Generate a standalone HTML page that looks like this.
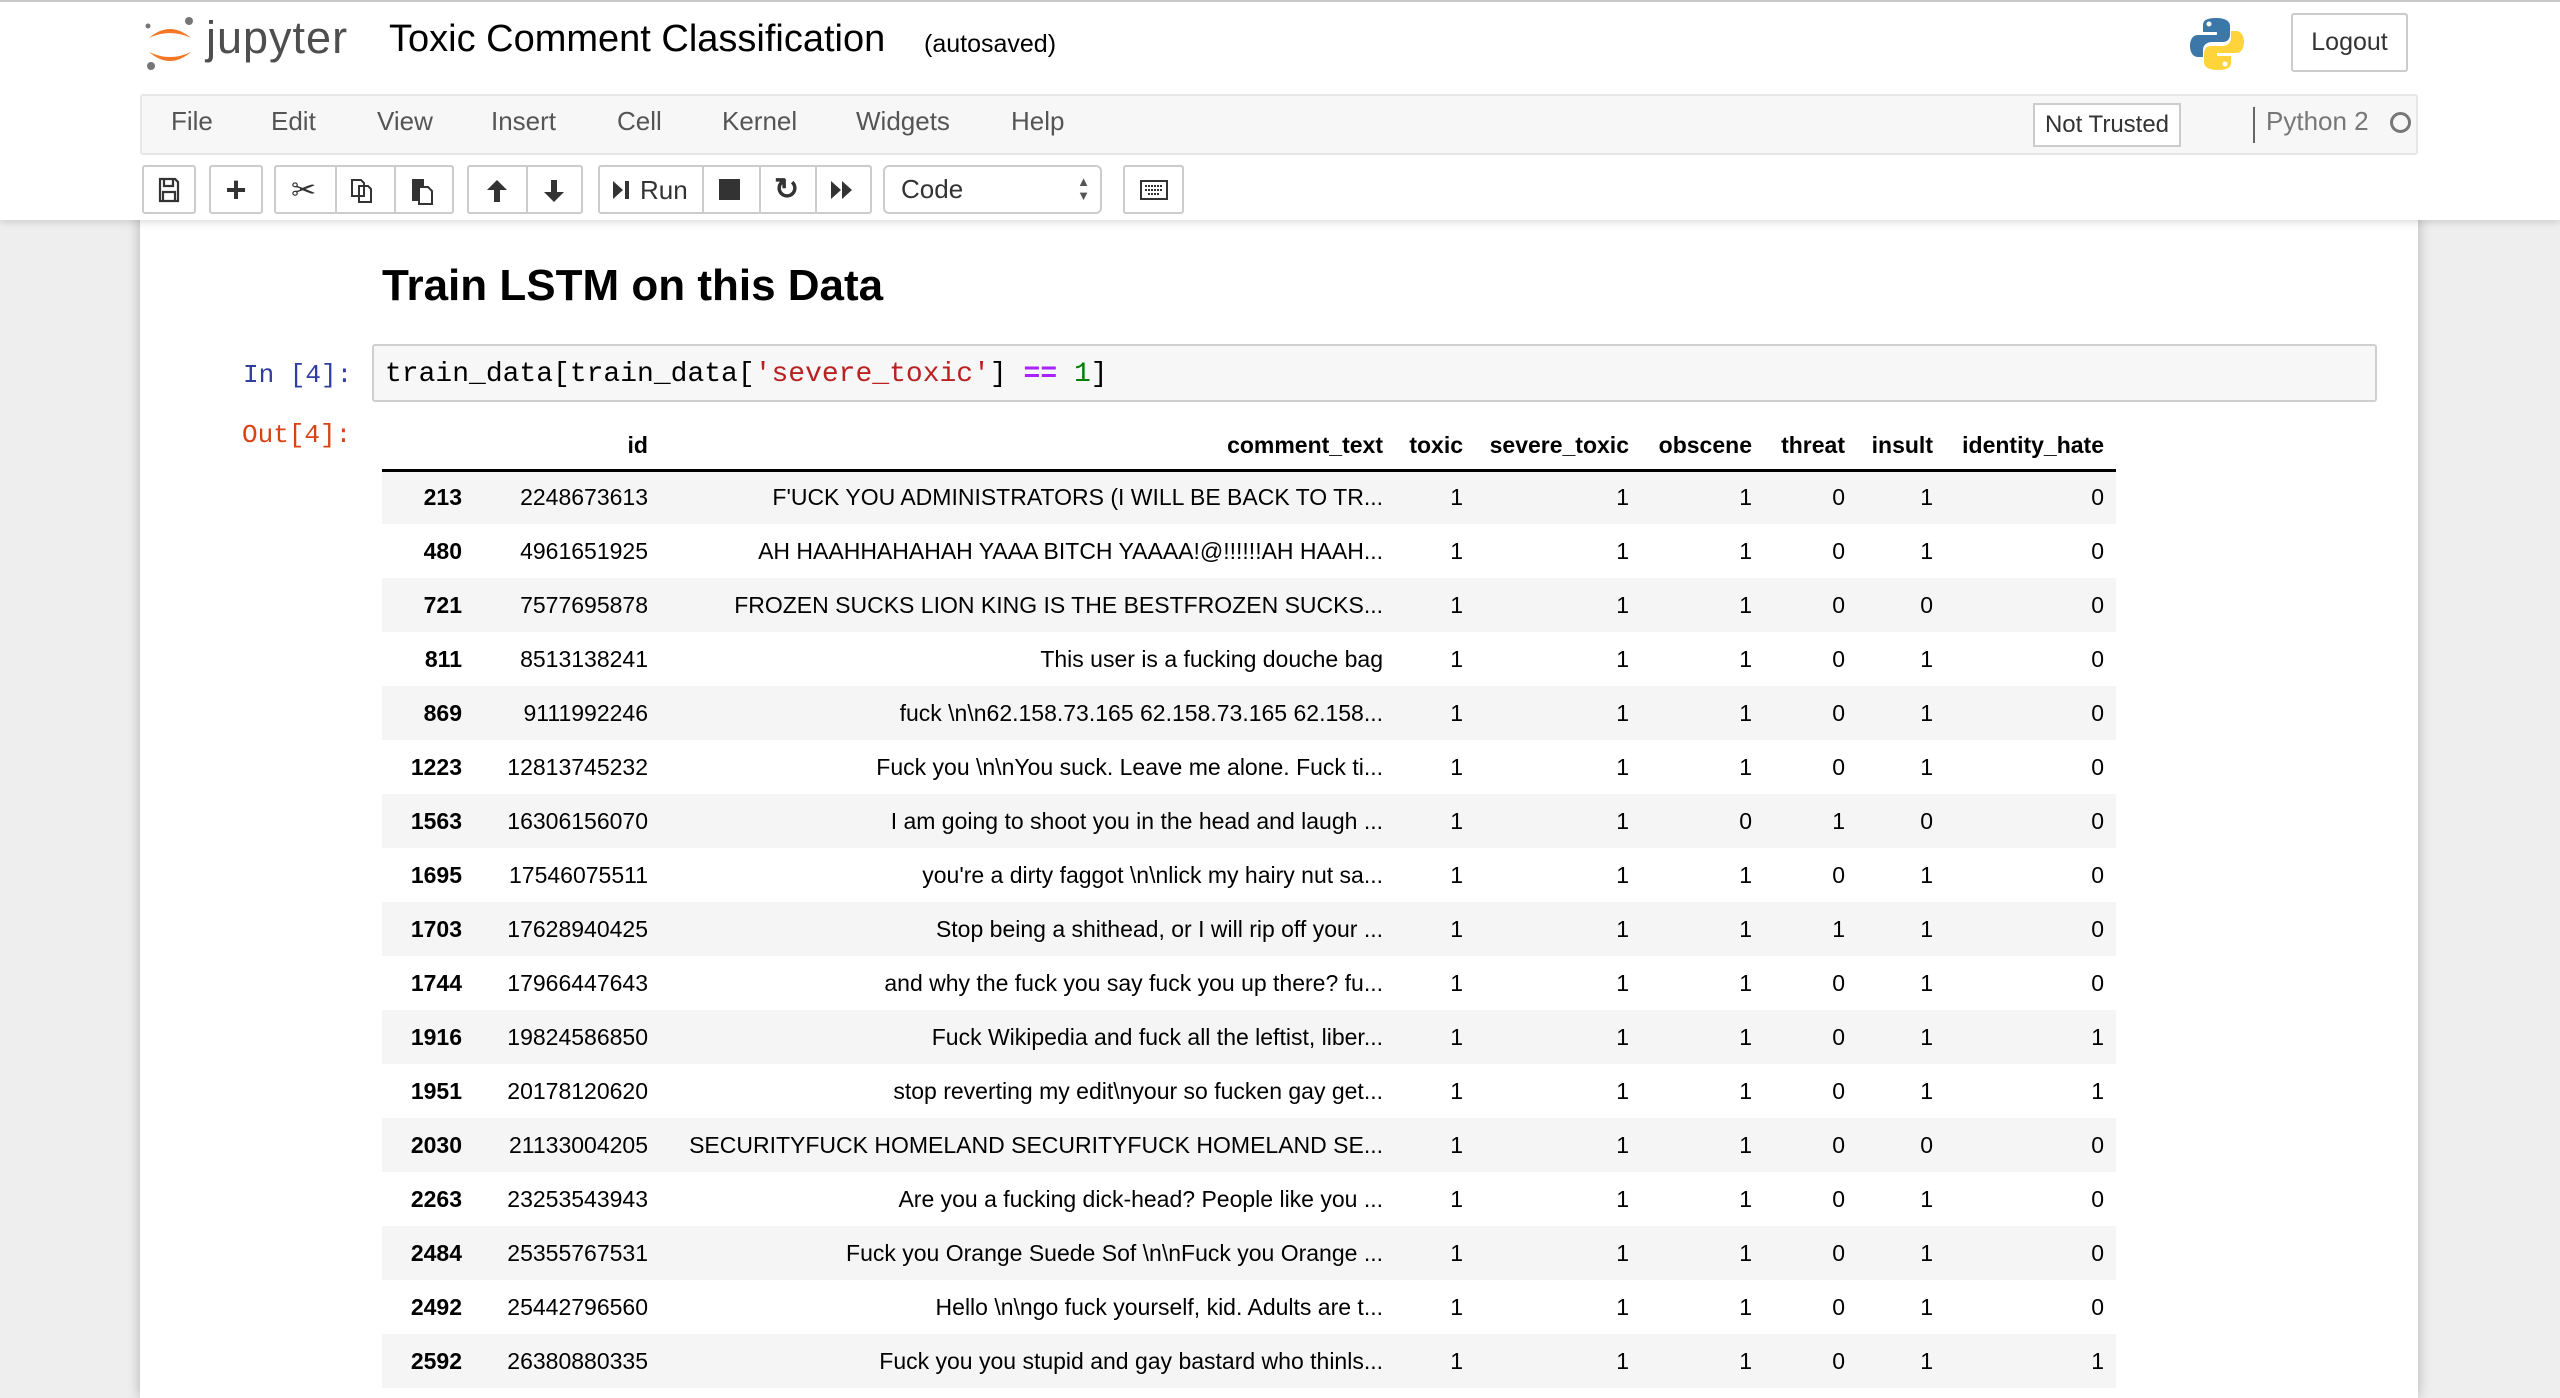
<!DOCTYPE html>
<html><head><meta charset="utf-8">
<style>
*{box-sizing:border-box;margin:0;padding:0}
html,body{width:2560px;height:1398px;overflow:hidden}
body{background:#eeeeee;font-family:"Liberation Sans",Arial,sans-serif;position:relative;color:#000}
#hdr{position:absolute;left:0;top:0;width:2560px;height:220px;background:#fff;border-top:2px solid #c8c8c8;box-shadow:0 2px 8px rgba(0,0,0,.15);z-index:2}
.abs{position:absolute}
#menubar{position:absolute;left:140px;top:92px;width:2278px;height:61px;background:#f7f7f7;border:2px solid #e7e7e7;border-radius:3px}
.mi{position:absolute;top:10px;font-size:26px;color:#555}
.btn{position:absolute;top:163px;height:49px;border:2px solid #ccc;border-radius:3px;background:#fff;display:flex;align-items:center;justify-content:center;font-size:26px;color:#333}
.sep{position:absolute;top:0;bottom:0;width:2px;background:#ccc}
#nb{position:absolute;left:140px;top:200px;width:2278px;height:1198px;background:#fff;box-shadow:0 0 12px rgba(0,0,0,.25)}
table{position:absolute;left:382px;top:422px;border-collapse:collapse;font-size:23px;table-layout:fixed}
td,th{text-align:right;padding:0 12px 0 0;height:54px;white-space:nowrap;overflow:hidden}
th{font-weight:bold;height:48px;vertical-align:middle}
thead tr{border-bottom:3px solid #000}
tbody tr:nth-child(odd){background:#f5f5f5}
tbody th{font-weight:bold}
</style></head><body>
<div id="nb"></div>
<div id="hdr">
  <svg class="abs" style="left:143px;top:14px" width="54" height="56" viewBox="0 0 54 56">
    <path d="M6 22 Q27 4 48 22 Q27 12 6 22Z" fill="#f37726"/>
    <path d="M6 36 Q27 54 48 36 Q27 46 6 36Z" fill="#f37726"/>
    <circle cx="46" cy="5" r="4" fill="#767677"/>
    <circle cx="5" cy="10" r="2.5" fill="#767677"/>
    <circle cx="8" cy="50" r="4" fill="#767677"/>
  </svg>
  <div class="abs" style="left:206px;top:10px;font-size:45px;color:#4e4e4e;letter-spacing:1px">jupyter</div>
  <div class="abs" style="left:389px;top:16px;font-size:38px;color:#000">Toxic Comment Classification</div>
  <div class="abs" style="left:924px;top:28px;font-size:25px;color:#000">(autosaved)</div>
  <svg class="abs" style="left:2189px;top:14px" width="56" height="56" viewBox="0 0 56 56">
    <path d="M27 2 C14 2 14 7 14 10 V16 H28 V19 H9 C3 19 1 25 1 30 C1 36 4 41 9 41 H14 V34 C14 29 18 26 23 26 H34 C38 26 41 23 41 19 V10 C41 5 36 2 27 2Z" fill="#3b77a8"/>
    <path d="M29 54 C42 54 42 49 42 46 V40 H28 V37 H47 C53 37 55 31 55 26 C55 20 52 15 47 15 H42 V22 C42 27 38 30 33 30 H22 C18 30 15 33 15 37 V46 C15 51 20 54 29 54Z" fill="#ffd43b"/>
    <circle cx="20" cy="8" r="2.5" fill="#fff"/><circle cx="36" cy="48" r="2.5" fill="#fff"/>
  </svg>
  <div class="abs" style="left:2291px;top:11px;width:117px;height:59px;border:2px solid #ccc;border-radius:3px;font-size:25px;color:#333;display:flex;align-items:center;justify-content:center">Logout</div>
  <div id="menubar">
    <div class="mi" style="left:29px">File</div>
    <div class="mi" style="left:129px">Edit</div>
    <div class="mi" style="left:235px">View</div>
    <div class="mi" style="left:349px">Insert</div>
    <div class="mi" style="left:475px">Cell</div>
    <div class="mi" style="left:580px">Kernel</div>
    <div class="mi" style="left:714px">Widgets</div>
    <div class="mi" style="left:869px">Help</div>
    <div class="abs" style="left:1891px;top:7px;width:148px;height:44px;border:2px solid #ccc;background:#fff;font-size:24px;color:#333;display:flex;align-items:center;justify-content:center">Not Trusted</div>
    <div class="abs" style="left:2111px;top:11px;width:2px;height:36px;background:#666"></div>
    <div class="mi" style="left:2124px;top:10px;color:#777">Python 2</div>
    <div class="abs" style="left:2248px;top:16px;width:21px;height:21px;border:3px solid #777;border-radius:50%"></div>
  </div>
  <div class="btn" style="left:142px;width:54px"><svg width="22" height="26" viewBox="0 0 22 26"><path d="M2 2H17L20 5V24H2Z M6 2V9H15V2 M5 15H17V24H5Z" fill="none" stroke="#333" stroke-width="2.2"/></svg></div>
  <div class="btn" style="left:209px;width:54px;font-size:36px;font-weight:bold">+</div>
  <div class="btn" style="left:274px;width:180px">
    <span style="position:absolute;left:15px;top:6px;font-size:30px">✂</span><div class="sep" style="left:59px"></div>
    <svg style="position:absolute;left:73px;top:11px" width="26" height="26" viewBox="0 0 26 26"><path d="M3 2H12L15 5V18H3Z M10 8H19L22 11V24H10Z" fill="#fff" stroke="#333" stroke-width="2"/></svg><div class="sep" style="left:118px"></div>
    <svg style="position:absolute;left:134px;top:10px" width="24" height="28" viewBox="0 0 24 28"><path d="M2 2H14V24H2Z" fill="#333"/><path d="M9 10H18L22 14V27H9Z" fill="#fff" stroke="#333" stroke-width="2"/></svg>
  </div>
  <div class="btn" style="left:467px;width:116px">
    <svg style="position:absolute;left:17px;top:12px" width="22" height="24" viewBox="0 0 22 24"><path d="M11 1L21 11H14V23H8V11H1Z" fill="#333"/></svg><div class="sep" style="left:57px"></div>
    <svg style="position:absolute;left:74px;top:12px" width="22" height="24" viewBox="0 0 22 24"><path d="M11 23L21 13H14V1H8V13H1Z" fill="#333"/></svg>
  </div>
  <div class="btn" style="left:598px;width:274px">
    <svg style="position:absolute;left:12px;top:13px" width="18" height="20" viewBox="0 0 18 20"><path d="M1 1L11 10L1 19Z M13 1H17V19H13Z" fill="#333"/></svg>
    <span style="position:absolute;left:40px;top:8px">Run</span><div class="sep" style="left:102px"></div>
    <div style="position:absolute;left:119px;top:12px;width:21px;height:21px;background:#333"></div><div class="sep" style="left:159px"></div>
    <span style="position:absolute;left:174px;top:5px;font-size:30px;font-weight:bold">↻</span><div class="sep" style="left:215px"></div>
    <svg style="position:absolute;left:230px;top:13px" width="24" height="20" viewBox="0 0 24 20"><path d="M1 1L11 10L1 19Z M12 1L22 10L12 19Z" fill="#333"/></svg>
  </div>
  <div class="btn" style="left:883px;width:219px;justify-content:flex-start;padding-left:16px;border-radius:6px">Code<span style="position:absolute;right:10px;top:8px;font-size:13px;line-height:14px;color:#555">▲<br>▼</span></div>
  <div class="btn" style="left:1123px;width:61px"><svg width="28" height="20" viewBox="0 0 28 20"><rect x="1" y="1" width="26" height="18" fill="none" stroke="#333" stroke-width="2"/><path d="M5 6H23M5 10H23M8 14H20" stroke="#333" stroke-width="2" stroke-dasharray="2 1"/></svg></div>
</div>

<div class="abs" style="left:382px;top:261px;font-size:44px;font-weight:bold">Train LSTM on this Data</div>
<div class="abs" style="left:243px;top:360px;font-family:'Liberation Mono',monospace;font-size:26px;color:#303F9F">In [4]:</div>
<div class="abs" style="left:372px;top:344px;width:2005px;height:58px;background:#f7f7f7;border:2px solid #cfcfcf;border-radius:3px"></div>
<div class="abs" style="left:385px;top:359px;font-family:'Liberation Mono',monospace;font-size:28px;white-space:pre">train_data[train_data[<span style="color:#BA2121">'severe_toxic'</span>] <span style="color:#AA22FF;font-weight:bold">==</span> <span style="color:#008000">1</span>]</div>
<div class="abs" style="left:242px;top:420px;font-family:'Liberation Mono',monospace;font-size:26px;color:#D84315">Out[4]:</div>

<table>
<colgroup><col style="width:92px"><col style="width:186px"><col style="width:735px"><col style="width:80px"><col style="width:166px"><col style="width:123px"><col style="width:93px"><col style="width:88px"><col style="width:171px"></colgroup>
<thead><tr><th></th><th>id</th><th>comment_text</th><th>toxic</th><th>severe_toxic</th><th>obscene</th><th>threat</th><th>insult</th><th>identity_hate</th></tr></thead>
<tbody>
<tr><th>213</th><td>2248673613</td><td>F'UCK YOU ADMINISTRATORS (I WILL BE BACK TO TR...</td><td>1</td><td>1</td><td>1</td><td>0</td><td>1</td><td>0</td></tr>
<tr><th>480</th><td>4961651925</td><td>AH HAAHHAHAHAH YAAA BITCH YAAAA!@!!!!!!AH HAAH...</td><td>1</td><td>1</td><td>1</td><td>0</td><td>1</td><td>0</td></tr>
<tr><th>721</th><td>7577695878</td><td>FROZEN SUCKS LION KING IS THE BESTFROZEN SUCKS...</td><td>1</td><td>1</td><td>1</td><td>0</td><td>0</td><td>0</td></tr>
<tr><th>811</th><td>8513138241</td><td>This user is a fucking douche bag</td><td>1</td><td>1</td><td>1</td><td>0</td><td>1</td><td>0</td></tr>
<tr><th>869</th><td>9111992246</td><td>fuck \n\n62.158.73.165 62.158.73.165 62.158...</td><td>1</td><td>1</td><td>1</td><td>0</td><td>1</td><td>0</td></tr>
<tr><th>1223</th><td>12813745232</td><td>Fuck you \n\nYou suck. Leave me alone. Fuck ti...</td><td>1</td><td>1</td><td>1</td><td>0</td><td>1</td><td>0</td></tr>
<tr><th>1563</th><td>16306156070</td><td>I am going to shoot you in the head and laugh ...</td><td>1</td><td>1</td><td>0</td><td>1</td><td>0</td><td>0</td></tr>
<tr><th>1695</th><td>17546075511</td><td>you're a dirty faggot \n\nlick my hairy nut sa...</td><td>1</td><td>1</td><td>1</td><td>0</td><td>1</td><td>0</td></tr>
<tr><th>1703</th><td>17628940425</td><td>Stop being a shithead, or I will rip off your ...</td><td>1</td><td>1</td><td>1</td><td>1</td><td>1</td><td>0</td></tr>
<tr><th>1744</th><td>17966447643</td><td>and why the fuck you say fuck you up there? fu...</td><td>1</td><td>1</td><td>1</td><td>0</td><td>1</td><td>0</td></tr>
<tr><th>1916</th><td>19824586850</td><td>Fuck Wikipedia and fuck all the leftist, liber...</td><td>1</td><td>1</td><td>1</td><td>0</td><td>1</td><td>1</td></tr>
<tr><th>1951</th><td>20178120620</td><td>stop reverting my edit\nyour so fucken gay get...</td><td>1</td><td>1</td><td>1</td><td>0</td><td>1</td><td>1</td></tr>
<tr><th>2030</th><td>21133004205</td><td>SECURITYFUCK HOMELAND SECURITYFUCK HOMELAND SE...</td><td>1</td><td>1</td><td>1</td><td>0</td><td>0</td><td>0</td></tr>
<tr><th>2263</th><td>23253543943</td><td>Are you a fucking dick-head? People like you ...</td><td>1</td><td>1</td><td>1</td><td>0</td><td>1</td><td>0</td></tr>
<tr><th>2484</th><td>25355767531</td><td>Fuck you Orange Suede Sof \n\nFuck you Orange ...</td><td>1</td><td>1</td><td>1</td><td>0</td><td>1</td><td>0</td></tr>
<tr><th>2492</th><td>25442796560</td><td>Hello \n\ngo fuck yourself, kid. Adults are t...</td><td>1</td><td>1</td><td>1</td><td>0</td><td>1</td><td>0</td></tr>
<tr><th>2592</th><td>26380880335</td><td>Fuck you you stupid and gay bastard who thinls...</td><td>1</td><td>1</td><td>1</td><td>0</td><td>1</td><td>1</td></tr>
</tbody></table>
</body></html>
